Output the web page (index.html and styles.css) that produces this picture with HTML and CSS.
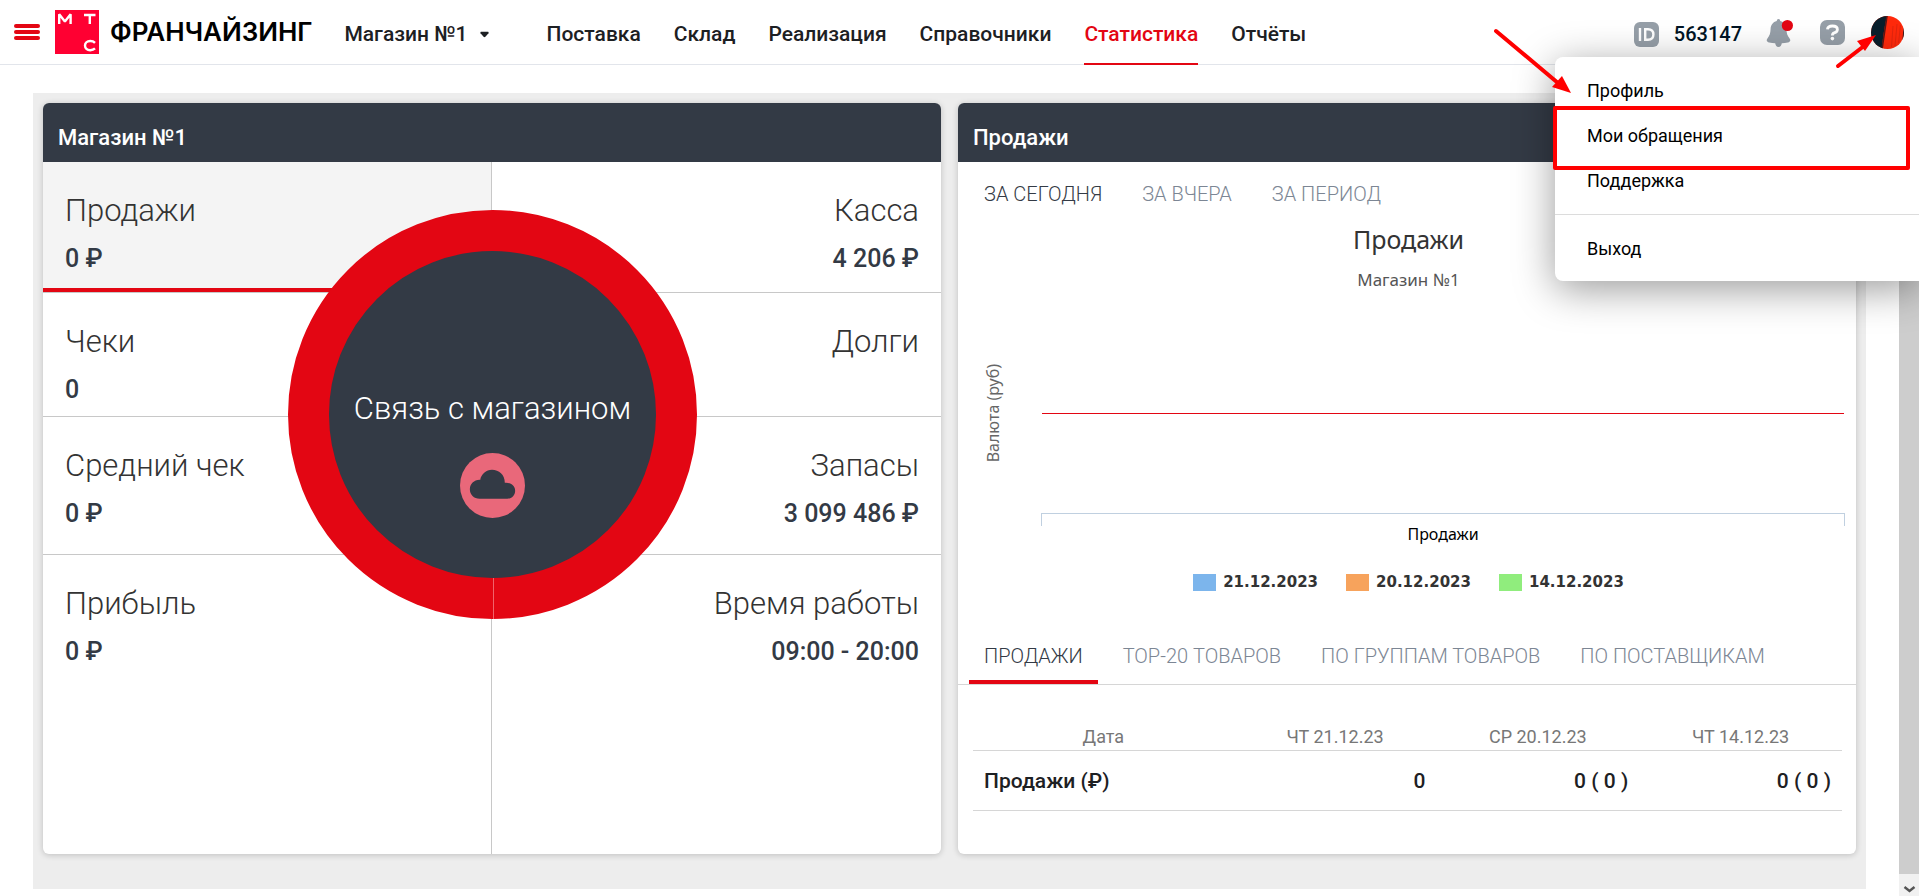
FILE: index.html
```html
<!DOCTYPE html>
<html lang="ru">
<head>
<meta charset="utf-8">
<meta name="viewport" content="width=device-width, initial-scale=1">
<title>Статистика</title>
<link rel="stylesheet" href="styles.css">
</head>
<body>
<header class="topbar">
  <button class="burger" aria-label="Меню"><span></span><span></span><span></span></button>
  <a class="brand" href="#">
    <svg class="brand-mark" viewBox="0 0 44 44" aria-hidden="true">
      <rect width="44" height="44" fill="#ff0032"/>
      <g fill="none" stroke="#fff" stroke-width="2.4">
        <path d="M4.2 14V4.2L9.9 11.4L15.6 4.2V14" stroke-linejoin="bevel"/>
        <path d="M29 5H40.5M34.8 5V14"/>
        <path d="M40 32.8C38.8 31.6 37 31 35.2 31C32 31 30 33 30 35.6C30 38.2 32 40.2 35.2 40.2C37 40.2 38.8 39.6 40 38.4"/>
      </g>
    </svg>
    <span class="brand-name">ФРАНЧАЙЗИНГ</span>
  </a>
  <button class="store">Магазин №1
    <svg class="caret" viewBox="0 0 10 7" aria-hidden="true"><path d="M1 .5H9Q10 .8 9.4 2L6 6Q5 7 4 6L.6 2Q0 .8 1 .5Z"/></svg>
  </button>
  <nav class="mainnav">
    <a href="#">Поставка</a>
    <a href="#">Склад</a>
    <a href="#">Реализация</a>
    <a href="#">Справочники</a>
    <a class="current" href="#">Статистика</a>
    <a href="#">Отчёты</a>
  </nav>
  <div class="account">
    <div class="account-id">
      <svg width="25" height="25" viewBox="0 0 25 25" aria-hidden="true">
        <rect width="25" height="25" rx="6" fill="#969fa8"/>
        <g fill="none" stroke="#fff" stroke-width="2.4"><path d="M6 6V19"/><path d="M11.2 7.2H14C17.6 7.2 19.4 9.2 19.4 12.5C19.4 15.8 17.6 17.8 14 17.8H11.2Z"/></g>
      </svg>
      <span>563147</span>
    </div>
    <button class="icon-button bell" aria-label="Уведомления">
      <svg width="28" height="30" viewBox="0 0 28 30" aria-hidden="true">
        <path fill="#969fa8" d="M12.5 1C13.6 1 14.2 1.8 14.2 3C18.2 4 20.2 7 20.4 11C20.6 15 21.2 17.6 23.6 20.4C25 22.3 24.2 23.8 21.8 24.4C19.8 24.9 17.8 25.2 15.8 25.3C15.4 27.6 14.4 29 12.5 29C10.6 29 9.6 27.6 9.2 25.3C7.2 25.2 5.2 24.9 3.2 24.4C.8 23.8 0 22.3 1.4 20.4C3.8 17.6 4.4 15 4.6 11C4.8 7 6.8 4 10.8 3C10.8 1.8 11.4 1 12.5 1Z"/>
        <circle cx="21.4" cy="7.5" r="5.6" fill="#e30613"/>
      </svg>
    </button>
    <button class="icon-button help" aria-label="Помощь">
      <svg width="25" height="25" viewBox="0 0 25 25" aria-hidden="true">
        <rect width="25" height="25" rx="7" fill="#969fa8"/>
        <path d="M7.4 9.4C7.8 6.8 9.8 6 12.4 6C15.4 6 17.4 7.2 17.4 9.5C17.4 11.6 15.8 12.4 14.2 12.9C12.9 13.3 12.4 13.8 12.4 15.4" fill="none" stroke="#fff" stroke-width="2.8"/>
        <circle cx="12.4" cy="18.6" r="1.8" fill="#fff"/>
      </svg>
    </button>
    <button class="icon-button avatar" aria-label="Профиль пользователя" aria-expanded="true">
      <svg width="33" height="33" viewBox="0 0 33 33" aria-hidden="true">
        <defs><clipPath id="face"><circle cx="16.5" cy="16.5" r="16.5"/></clipPath></defs>
        <g clip-path="url(#face)">
          <rect width="33" height="33" fill="#ff2a0c"/>
          <path d="M0 0H16C14 8 12 20 11 33H0Z" fill="#0a1f2c"/>
          <path d="M16 0L11 33" stroke="#5d1614" stroke-width="1.6"/>
          <path d="M33 7L31 28H33Z" fill="#2a1a20"/>
          <path d="M22 10L20.5 31M26 8L24 30M29.4 9L27.6 27" stroke="#e2260e" stroke-width="1"/>
        </g>
      </svg>
    </button>
    <div class="menu">
      <a href="#">Профиль</a>
      <a href="#">Мои обращения</a>
      <a href="#">Поддержка</a>
      <hr>
      <a href="#">Выход</a>
    </div>
    <svg class="pointers" viewBox="0 0 439 180" aria-hidden="true">
      <g stroke="#f00" stroke-width="4" fill="none" stroke-linecap="round"><path d="M16 31L78 83"/><path d="M358 66L384 46"/><path d="M75 108H428V168H75Z" stroke-linejoin="round"/></g>
      <g fill="#f00"><path d="M91 93L72 87L82 76Z"/><path d="M396 35L385 51L377 41Z"/></g>
    </svg>
  </div>
</header>

<div class="shell">
  <main class="page">
    <div class="board">
      <section class="card">
        <h2 class="card-title">Магазин №1</h2>
        <div class="stats">
          <button class="stat active"><span>Продажи</span><b>0 ₽</b></button>
          <button class="stat right"><span>Касса</span><b>4 206 ₽</b></button>
          <button class="stat"><span>Чеки</span><b>0</b></button>
          <button class="stat right"><span>Долги</span></button>
          <button class="stat"><span>Средний чек</span><b>0 ₽</b></button>
          <button class="stat right"><span>Запасы</span><b>3 099 486 ₽</b></button>
          <button class="stat"><span>Прибыль</span><b>0 ₽</b></button>
          <button class="stat right"><span>Время работы</span><b>09:00 - 20:00</b></button>
          <div class="link-state">
            <span>Связь с магазином</span>
            <svg width="65" height="65" viewBox="0 0 66 66" aria-hidden="true">
              <circle cx="33" cy="33" r="33" fill="#e9687a"/>
              <path fill="#333a45" d="M20 46.5C14 46.5 10 42 10 36.8C10 31.5 14.5 27 20.5 27.3C21.5 21.5 26.5 17 32.5 17C39.5 17 45.5 22 45.5 30.2C51 29.6 56 33 56 38.3C56 43 52.5 46.5 48 46.5Z"/>
            </svg>
          </div>
        </div>
      </section>

      <section class="card">
        <h2 class="card-title">Продажи</h2>
        <div class="periods">
          <button class="current">ЗА СЕГОДНЯ</button>
          <button>ЗА ВЧЕРА</button>
          <button>ЗА ПЕРИОД</button>
        </div>
        <div class="chart">
          <h3 class="chart-title">Продажи</h3>
          <p class="chart-subtitle">Магазин №1</p>
          <div class="chart-body">
            <div class="y-title"><span>Валюта (руб)</span></div>
            <div class="plot"><div class="zero-line"></div></div>
            <div class="x-axis"></div>
            <div class="x-label">Продажи</div>
          </div>
          <ul class="legend">
            <li><i class="blue"></i>21.12.2023</li>
            <li><i class="orange"></i>20.12.2023</li>
            <li><i class="green"></i>14.12.2023</li>
          </ul>
        </div>
        <div class="reports">
          <button class="current">ПРОДАЖИ</button>
          <button>TOP-20 ТОВАРОВ</button>
          <button>ПО ГРУППАМ ТОВАРОВ</button>
          <button>ПО ПОСТАВЩИКАМ</button>
        </div>
        <div class="table-wrap">
          <table class="sales">
            <thead><tr><th class="name">Дата</th><th>ЧТ 21.12.23</th><th>СР 20.12.23</th><th>ЧТ 14.12.23</th></tr></thead>
            <tbody><tr><td>Продажи (₽)</td><td>0</td><td>0 ( 0 )</td><td>0 ( 0 )</td></tr></tbody>
          </table>
        </div>
      </section>
    </div>
  </main>
  <div class="scrollbar" aria-hidden="true">
    <svg width="20" height="22" viewBox="0 0 20 22"><rect width="20" height="22" fill="#f1f1f1"/><path d="M5.5 13L10.5 17L15.5 13" fill="none" stroke="#555" stroke-width="2.4"/></svg>
  </div>
</div>
</body>
</html>
```
FILE: styles.css
```css
* { box-sizing: border-box; }
body {
  margin: 0;
  min-height: 100vh;
  display: flex;
  flex-direction: column;
  overflow: hidden;
  background: #fff;
  color: #1d2023;
  font-family: Roboto, "Liberation Sans", sans-serif;
}
button { margin: 0; padding: 0; border: 0; background: none; font: inherit; color: inherit; cursor: pointer; }
a { color: inherit; text-decoration: none; }
h2, h3, p, ul { margin: 0; padding: 0; }

.topbar {
  display: flex;
  align-items: center;
  height: 65px;
  padding: 0 15px 0 14px;
  border-bottom: 1px solid #e2e5eb;
  font-size: 21px;
  font-weight: 500;
  line-height: 24px;
}
.burger { display: flex; flex-direction: column; gap: 2px; width: 26px; }
.burger span { height: 4px; border-radius: 2px; background: #e30613; }
.brand { display: flex; align-items: center; gap: 11px; margin-left: 15px; color: #000; }
.brand-mark { width: 44px; height: 44px; }
.brand-name { font: 600 26px/32px Inter, "DejaVu Sans", sans-serif; }
.store { display: flex; align-items: center; gap: 12px; margin-left: 32px; padding-top: 4px; }
.caret { width: 9px; height: 7px; fill: #1d2023; }
.mainnav { display: flex; align-self: stretch; gap: 33px; margin-left: 58px; }
.mainnav a { height: 65px; padding-top: 22px; }
.mainnav .current { color: #e30613; border-bottom: 2px solid #e30613; }
.account { position: relative; display: flex; align-items: center; align-self: stretch; margin-left: auto; }
.account svg { display: block; }
.account-id { display: flex; align-items: center; gap: 15px; padding-top: 4px; color: #001424; font-size: 20px; }
.bell { margin-left: 24px; padding-top: 1px; }
.help { margin-left: 26px; }
.avatar { margin-left: 26px; }
.menu {
  position: absolute;
  z-index: 2;
  top: 57px;
  right: -15px;
  width: 364px;
  padding: 11px 0 10px;
  border-radius: 8px 0 0 8px;
  background: #fff;
  box-shadow: 0 8px 40px rgba(0, 0, 0, .4);
  color: #000;
  font-size: 18px;
  font-weight: 400;
}
.menu a { display: block; padding: 0 32px; line-height: 45px; }
.menu hr { margin: 11px 0; border: 0; border-top: 1px solid #dcdcdc; }
.account .pointers { position: absolute; z-index: 3; top: 0; right: -15px; width: 439px; height: 180px; pointer-events: none; }

.shell { display: flex; flex: 1; }
.page { flex: 1; min-width: 0; padding: 28px 33px 7px; }
.board { display: grid; grid-template-columns: 1fr 1fr; gap: 17px; padding: 10px 10px 35px; background: #ededed; }
.card { overflow: hidden; border-radius: 6px; background: #fff; box-shadow: 0 1px 6px rgba(0, 0, 0, .2); }
.card-title { padding: 21px 15px 10px; background: #333a45; color: #fff; font-size: 22px; font-weight: 500; line-height: 28px; }

.stats { position: relative; display: grid; grid-template-columns: 1fr 1fr; grid-template-rows: 131px 124px 138px 299px; }
.stat { display: flex; flex-direction: column; align-items: flex-start; gap: 12px; padding: 29px 22px 0; border-bottom: 1px solid #c8c8c8; color: #333; }
.stat:not(.right) { border-right: 1px solid #c8c8c8; }
.stat:nth-of-type(n+7) { border-bottom: 0; }
.stat.right { align-items: flex-end; }
.stat.active { background: #f4f4f4; box-shadow: inset 0 -4px #e30613; }
.stat span { font-size: 31px; font-weight: 300; line-height: 40px; }
.stat b { color: #333a45; font-size: 25px; font-weight: 500; line-height: 32px; }
.link-state {
  position: absolute;
  top: 48px;
  left: 50%;
  display: flex;
  flex-direction: column;
  align-items: center;
  gap: 24px;
  width: 409px;
  height: 409px;
  margin-left: -204px;
  padding-top: 138px;
  border: 41px solid #e30613;
  border-radius: 50%;
  background: #333a45;
  color: #fff;
}
.link-state::after { content: ""; position: absolute; top: 100%; left: 50%; width: 1px; height: 41px; background: #f0636b; }
.link-state span { font-size: 31px; font-weight: 300; line-height: 40px; }

.periods, .reports { display: flex; gap: 10px; padding: 20px 11px 0; color: #7c8694; font-size: 20px; font-weight: 300; line-height: 24px; }
.periods button, .reports button { padding: 0 15px; }
.periods .current, .reports .current { color: #333a45; }
.reports { padding-top: 52px; border-bottom: 1px solid #d6d6d6; }
.reports button { padding-bottom: 12px; border-bottom: 4px solid transparent; }
.reports .current { border-bottom-color: #e30613; }

.chart { padding: 17px 11px 0 0; font-family: "Noto Sans", sans-serif; text-align: center; }
.chart-title { padding-left: 14px; color: #333; font-size: 25px; font-weight: 400; line-height: 32px; }
.chart-subtitle { margin-top: 15px; padding-left: 14px; color: #555; font-size: 17px; line-height: 20px; }
.chart-body { display: grid; grid-template-columns: 83px 1fr; grid-template-rows: 200px 13px 20px; margin-top: 23px; }
.y-title { display: flex; align-items: center; justify-content: center; padding-right: 14px; color: #666; font-size: 16px; line-height: 20px; }
.y-title span { writing-mode: vertical-rl; transform: rotate(180deg); white-space: nowrap; }
.plot { display: flex; align-items: center; }
.zero-line { flex: 1; height: 1px; margin: 0 1px; background: #e30613; }
.x-axis { grid-column: 2; border: 1px solid #c0d0e0; border-bottom: 0; }
.x-label { grid-column: 2; color: #000; font-size: 16px; line-height: 16px; }
.legend { display: flex; justify-content: center; gap: 28px; margin-top: 26px; padding-left: 14px; list-style: none; color: #333; font-family: "DejaVu Sans", sans-serif; font-size: 15px; font-weight: 700; line-height: 20px; }
.legend li { display: flex; align-items: center; gap: 7px; }
.legend i { width: 23px; height: 17px; }
.blue { background: #7cb5ec; }
.orange { background: #f7a35c; }
.green { background: #90ed7d; }

.table-wrap { padding: 40px 14px 0 15px; }
.sales { width: 100%; table-layout: fixed; border-collapse: collapse; }
.sales th { padding: 0 0 1px; border-bottom: 1px solid #d6d6d6; color: #777; font-size: 18px; font-weight: 400; line-height: 24px; }
.sales .name { width: 30%; }
.sales td { padding: 17px 11px 15px; border-bottom: 1px solid #d6d6d6; font-size: 21px; font-weight: 500; line-height: 27px; text-align: right; }
.sales td:first-child { text-align: left; }

.scrollbar { display: flex; align-items: flex-end; width: 20px; background: #cdcdcd; }
```
